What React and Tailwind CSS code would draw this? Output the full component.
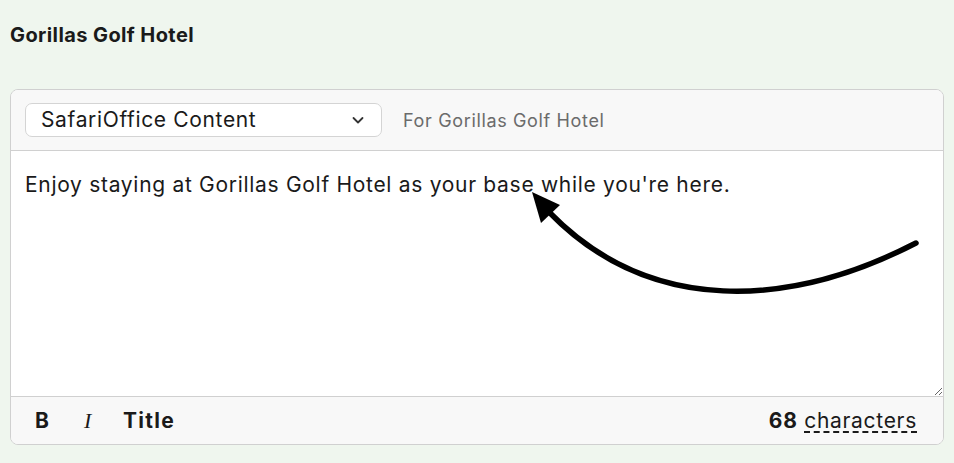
import React, { useState } from 'react';

const Chevron = () => (
    <svg width="14" height="14" viewBox="0 0 14 14" fill="none" className="shrink-0">
        <path d="M2.5 5L7 9.5L11.5 5" stroke="#333" strokeWidth="1.8" strokeLinecap="round" strokeLinejoin="round" />
    </svg>
);

const Arrow = () => (
    <svg className="absolute left-0 top-0 pointer-events-none" width="954" height="463" viewBox="0 0 954 463" fill="none">
        <path d="M916 243 C790 308, 650 316, 549 212" stroke="#000" strokeWidth="5.5" strokeLinecap="round" fill="none" />
        <path d="M532 192 L541 223 L560 205 Z" fill="#000" />
    </svg>
);

const App = () => {
    const [text, setText] = useState("Enjoy staying at Gorillas Golf Hotel as your base while you're here.");

    return (
        <div className="relative w-[954px] h-[463px] bg-[#eff6ee] px-[10px] overflow-hidden font-['Inter','Noto_Sans',sans-serif]">
            <h1 className="pt-[23px] text-[20px] leading-6 font-bold tracking-[0.4px] text-[#1a1a1a]">Gorillas Golf Hotel</h1>

            <div className="mt-[42px] w-[934px] border border-[#d0d0d0] rounded-[8px] overflow-hidden bg-white">
                {/* header */}
                <div className="h-[61px] flex items-center pl-[14px] bg-[#f8f8f8] border-b border-[#d0d0d0]">
                    <div className="w-[357px] h-[34px] flex items-center justify-between pl-[15px] pr-[16px] bg-white border border-[#d4d4d4] rounded-[7px]">
                        <span className="text-[21px] tracking-[0.65px] text-[#1a1a1a]">SafariOffice Content</span>
                        <Chevron />
                    </div>
                    <span className="ml-[21px] text-[18px] tracking-[0.65px] text-[#6b6b6b]">For Gorillas Golf Hotel</span>
                </div>

                {/* body */}
                <textarea
                    value={text}
                    onChange={(e) => setText(e.target.value)}
                    className="block w-full h-[245px] px-[14px] pt-[20px] text-[21px] leading-7 tracking-[0.7px] text-[#1a1a1a] resize-y outline-none bg-white font-['Inter','Noto_Sans',sans-serif]"
                />

                {/* footer */}
                <div className="h-[48px] flex items-center justify-between pl-[24px] pr-[26px] bg-[#f8f8f8] border-t border-[#d0d0d0]">
                    <div className="flex items-center text-[21px] tracking-[0.7px] text-[#1a1a1a]">
                        <span className="font-bold tracking-[1px]">B</span>
                        <span className="ml-[34px] text-[22px] italic font-['Liberation_Serif',serif]">I</span>
                        <span className="ml-[31px] font-bold tracking-[1.3px]">Title</span>
                    </div>
                    <div className="text-[21px] tracking-[0.7px] text-[#1a1a1a]">
                        <span className="font-bold">{text.length}</span>{' '}
                        <span className="underline decoration-dashed decoration-[1.5px] underline-offset-[4px]">characters</span>
                    </div>
                </div>
            </div>

            <Arrow />
        </div>
    );
};

export default App;
